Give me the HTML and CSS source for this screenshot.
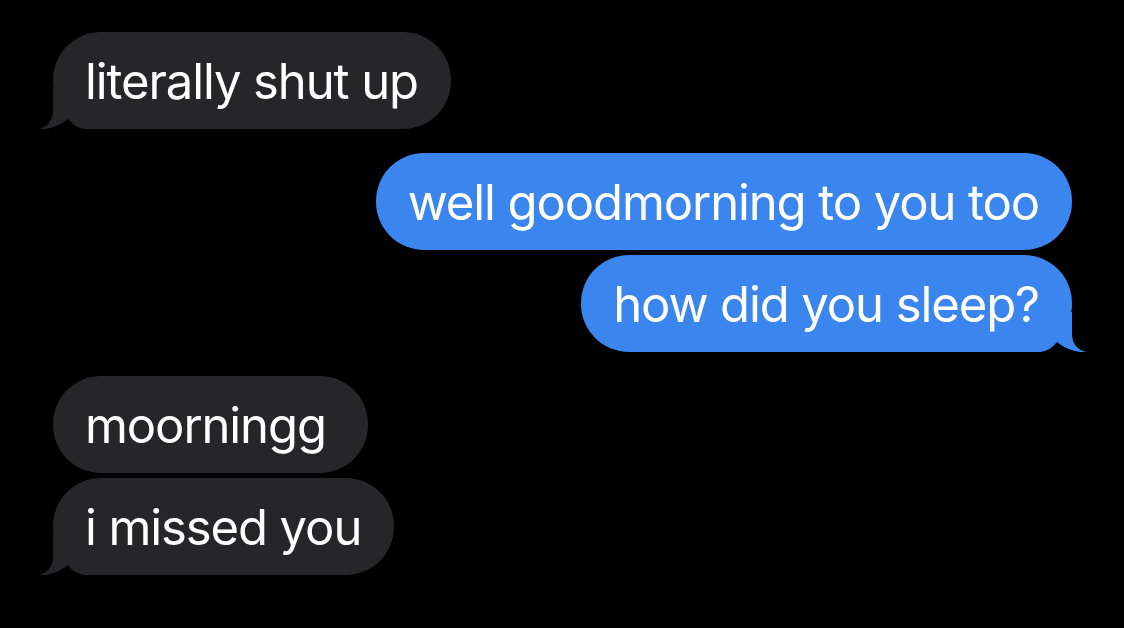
FILE: index.html
```html
<!DOCTYPE html>
<html lang="en">

<head>
    <meta charset="UTF-8">
    <meta name="viewport" content="width=device-width, initial-scale=1.0">
    <title>Messages</title>
    <link rel="stylesheet" href="styles.css">
</head>

<body>
    <div class="thread">
        <div class="group them">
            <div class="bubble tail">literally shut up
                <svg class="tailsvg" viewBox="0 0 70 40"><path d="M16,0 L16,22 C16,32 10,38 2,40 C12,41 24,36 31,30 C35,35 40,39 48,40 L70,40 L70,0 Z"/></svg>
            </div>
        </div>

        <div class="group me">
            <div class="bubble">well goodmorning to you too</div>
            <div class="bubble tail">how did you sleep?
                <svg class="tailsvg" viewBox="0 0 70 40"><path d="M16,0 L16,22 C16,32 10,38 2,40 C12,41 24,36 31,30 C35,35 40,39 48,40 L70,40 L70,0 Z"/></svg>
            </div>
        </div>

        <div class="group them">
            <div class="bubble wide">moorningg</div>
            <div class="bubble tail">i missed you
                <svg class="tailsvg" viewBox="0 0 70 40"><path d="M16,0 L16,22 C16,32 10,38 2,40 C12,41 24,36 31,30 C35,35 40,39 48,40 L70,40 L70,0 Z"/></svg>
            </div>
        </div>
    </div>
</body>

</html>
```

FILE: styles.css
```css
body {
    margin: 0px;
    padding: 0px;
    background-color: #000;
    font-family: Inter, "Liberation Sans", sans-serif;
}

.thread {
    display: flex;
    flex-direction: column;
    gap: 24px;
    padding: 32px 52px 0px 53px;
}

.group {
    display: flex;
    flex-direction: column;
    gap: 5px;
}

.them {
    align-items: flex-start;
}

.me {
    align-items: flex-end;
}

.bubble {
    position: relative;
    z-index: 0;
    height: 97px;
    box-sizing: border-box;
    padding: 3px 33px 0px 32px;
    line-height: 94px;
    font-size: 49px;
    letter-spacing: -1.1px;
    color: #fff;
    border-radius: 48px;
    white-space: nowrap;
}

.bubble.wide {
    padding-right: 42px;
}

.them .bubble {
    background-color: #262628;
}

.me .bubble {
    background-color: #3b86ee;
}

.tailsvg {
    position: absolute;
    z-index: -1;
    bottom: 0px;
    width: 70px;
    height: 40px;
}

.them .tailsvg {
    left: -16px;
    fill: #262628;
}

.me .tailsvg {
    right: -16px;
    fill: #3b86ee;
    transform: scaleX(-1);
}
```
